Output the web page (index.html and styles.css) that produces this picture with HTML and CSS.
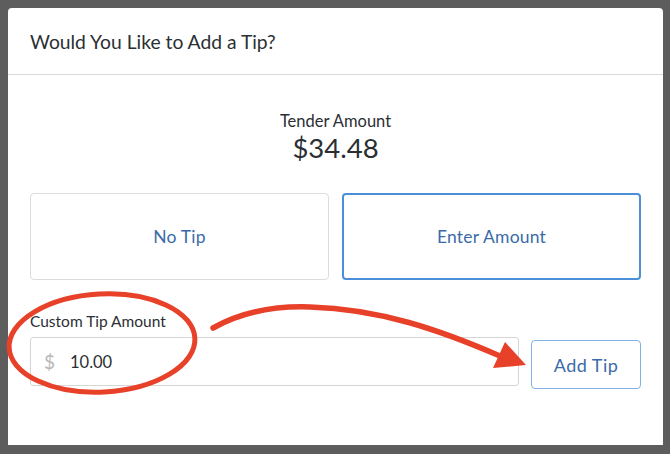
FILE: index.html
```html
<!DOCTYPE html>
<html>
<head>
<meta charset="utf-8">
<link rel="stylesheet" href="styles.css">
</head>
<body>
<div class="modal">
  <div class="modal-header">Would You Like to Add a Tip?</div>
  <div class="modal-body">
    <div class="tender-label">Tender Amount</div>
    <div class="tender-amount">$34.48</div>
    <div class="choices">
      <button class="choice">No Tip</button>
      <button class="choice active">Enter Amount</button>
    </div>
    <div class="field-label">Custom Tip Amount</div>
    <div class="field-row">
      <div class="input">
        <span class="currency">$</span>
        <span class="value">10.00</span>
      </div>
      <button class="add-tip">Add Tip</button>
    </div>
  </div>
</div>
<svg class="annotation" width="670" height="454" viewBox="0 0 670 454">
  <ellipse cx="102" cy="343" rx="93" ry="49" transform="rotate(-3 102 343)" fill="none" stroke="#e8412a" stroke-width="5"/>
  <path d="M213 328 C 245 310, 280 306, 310 307 C 380 309, 440 330, 500 356" fill="none" stroke="#e8412a" stroke-width="5.5" stroke-linecap="round"/>
  <polygon points="505,342 526,365 493,368" fill="#e8412a"/>
</svg>
</body>
</html>
```
FILE: styles.css
```css
html, body {
  margin: 0;
  padding: 0;
}
body {
  width: 670px;
  height: 454px;
  background: #5d5d5d;
  font-family: "Lato", "Open Sans", sans-serif;
  position: relative;
  overflow: hidden;
}
.modal {
  margin: 8px 0 0 8px;
  width: 655px;
  height: 437px;
  background: #fff;
  border-radius: 4px 4px 0 0;
  box-sizing: border-box;
}
.modal-header {
  height: 67px;
  box-sizing: border-box;
  padding: 22px 0 0 22px;
  font-size: 19.3px;
  line-height: 24px;
  color: #2b2f33;
  border-bottom: 1px solid #d9d9d9;
}
.modal-body {
  padding: 0 22px;
}
.tender-label {
  margin-top: 36px;
  text-align: center;
  font-size: 16.5px;
  line-height: 21px;
  color: #2b2f33;
}
.tender-amount {
  margin-top: 1px;
  text-align: center;
  font-size: 27.5px;
  line-height: 30px;
  color: #2b2f33;
}
.choices {
  margin-top: 30px;
  display: grid;
  grid-template-columns: 1fr 1fr;
  gap: 13px;
}
.choice {
  height: 87px;
  background: #fff;
  border: 1px solid #dcdcdc;
  border-radius: 4px;
  font-family: inherit;
  font-size: 17.5px;
  letter-spacing: 0.2px;
  color: #3a6ba8;
}
.choice.active {
  border: 2px solid #4b8fd8;
}
.field-label {
  margin-top: 32px;
  font-size: 15.5px;
  line-height: 19px;
  color: #2b2f33;
}
.field-row {
  margin-top: 6px;
  display: flex;
  gap: 12px;
  align-items: flex-start;
}
.input {
  flex: 1;
  height: 49px;
  box-sizing: border-box;
  border: 1px solid #d6d6d6;
  border-radius: 3px;
  display: flex;
  align-items: center;
  padding-left: 13px;
}
.currency {
  font-size: 19px;
  color: #b8b8b8;
  width: 26px;
}
.value {
  font-size: 16.5px;
  color: #2b2f33;
}
.add-tip {
  margin-top: 3px;
  width: 110px;
  height: 49px;
  background: #fff;
  border: 1px solid #7fb1e3;
  border-radius: 4px;
  font-family: inherit;
  font-size: 18px;
  letter-spacing: 0.5px;
  color: #3a6ba8;
}
.annotation {
  position: absolute;
  left: 0;
  top: 0;
  pointer-events: none;
}
```
